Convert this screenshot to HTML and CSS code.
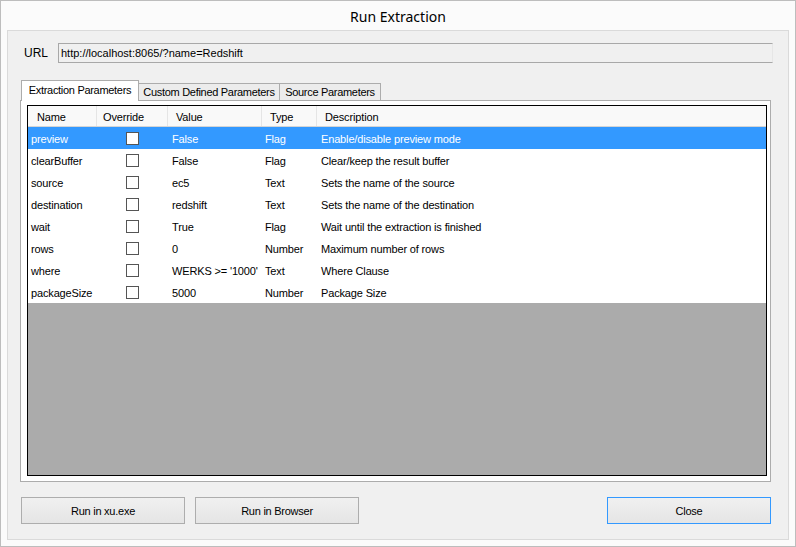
FILE: index.html
```html
<!DOCTYPE html>
<html>
<head>
<meta charset="utf-8">
<link rel="stylesheet" href="styles.css">
</head>
<body>
<div class="window">
  <div class="title">Run Extraction</div>
  <div class="client">
    <div class="url-row">
      <span class="url-label">URL</span>
      <div class="url-box">http://localhost:8065/?name=Redshift</div>
    </div>
    <div class="tabs">
      <div class="tab tab-active">Extraction Parameters</div>
      <div class="tab tab-custom">Custom Defined Parameters</div>
      <div class="tab tab-source">Source Parameters</div>
    </div>
    <div class="panel">
      <div class="grid">
        <div class="row head">
          <div class="c c-name">Name</div>
          <div class="c c-over">Override</div>
          <div class="c c-val">Value</div>
          <div class="c c-type">Type</div>
          <div class="c c-desc">Description</div>
        </div>
        <div class="row selected">
          <div class="c c-name">preview</div>
          <div class="c c-over"><span class="cb"></span></div>
          <div class="c c-val">False</div>
          <div class="c c-type">Flag</div>
          <div class="c c-desc">Enable/disable preview mode</div>
        </div>
        <div class="row">
          <div class="c c-name">clearBuffer</div>
          <div class="c c-over"><span class="cb"></span></div>
          <div class="c c-val">False</div>
          <div class="c c-type">Flag</div>
          <div class="c c-desc">Clear/keep the result buffer</div>
        </div>
        <div class="row">
          <div class="c c-name">source</div>
          <div class="c c-over"><span class="cb"></span></div>
          <div class="c c-val">ec5</div>
          <div class="c c-type">Text</div>
          <div class="c c-desc">Sets the name of the source</div>
        </div>
        <div class="row">
          <div class="c c-name">destination</div>
          <div class="c c-over"><span class="cb"></span></div>
          <div class="c c-val">redshift</div>
          <div class="c c-type">Text</div>
          <div class="c c-desc">Sets the name of the destination</div>
        </div>
        <div class="row">
          <div class="c c-name">wait</div>
          <div class="c c-over"><span class="cb"></span></div>
          <div class="c c-val">True</div>
          <div class="c c-type">Flag</div>
          <div class="c c-desc">Wait until the extraction is finished</div>
        </div>
        <div class="row">
          <div class="c c-name">rows</div>
          <div class="c c-over"><span class="cb"></span></div>
          <div class="c c-val">0</div>
          <div class="c c-type">Number</div>
          <div class="c c-desc">Maximum number of rows</div>
        </div>
        <div class="row">
          <div class="c c-name">where</div>
          <div class="c c-over"><span class="cb"></span></div>
          <div class="c c-val">WERKS &gt;= '1000'</div>
          <div class="c c-type">Text</div>
          <div class="c c-desc">Where Clause</div>
        </div>
        <div class="row">
          <div class="c c-name">packageSize</div>
          <div class="c c-over"><span class="cb"></span></div>
          <div class="c c-val">5000</div>
          <div class="c c-type">Number</div>
          <div class="c c-desc">Package Size</div>
        </div>
        <div class="empty"></div>
      </div>
    </div>
    <div class="buttons">
      <div class="btn btn-1">Run in xu.exe</div>
      <div class="btn btn-2">Run in Browser</div>
      <div class="spacer"></div>
      <div class="btn btn-focus">Close</div>
    </div>
  </div>
</div>
</body>
</html>
```

FILE: styles.css
```css
* { box-sizing: border-box; }
html, body { margin: 0; padding: 0; }
body {
  width: 796px;
  height: 547px;
  overflow: hidden;
  font-family: "Liberation Sans", Arial, sans-serif;
  font-size: 11px;
  color: #000;
  background: #fff;
}
.window {
  width: 796px;
  height: 547px;
  border: 1px solid #bdbdbd;
  background: #fbfbfb;
  display: flex;
  flex-direction: column;
  padding: 0 6px 6px 6px;
}
.title {
  height: 29px;
  flex: none;
  display: flex;
  align-items: center;
  justify-content: center;
  font-family: "Noto Sans", "Open Sans", sans-serif;
  font-size: 14px;
  padding-top: 1px;
  color: #000;
}
.client {
  flex: 1;
  border: 1px solid #dadada;
  background: #f0f0f0;
  display: flex;
  flex-direction: column;
  padding: 12px 17px 0 12px;
}
.url-row {
  display: flex;
  align-items: center;
  height: 20px;
  margin-right: -2px;
}
.url-label {
  width: 38px;
  padding-left: 4px;
  font-size: 12px;
}
.url-box {
  flex: 1;
  height: 20px;
  border: 1px solid #a8a8a8;
  border-right-color: #e6e6e6;
  background: #f0f0f0;
  padding-left: 2px;
  line-height: 18px;
}
.tabs {
  display: flex;
  align-items: flex-end;
  margin-top: 17px;
  height: 20px;
  padding-left: 1px;
  letter-spacing: -0.3px;
}
.tab {
  height: 17px;
  border: 1px solid #acacac;
  border-bottom: none;
  background: #ececec;
  line-height: 16px;
  text-align: center;
}
.tab-active {
  width: 118px;
  height: 21px;
  background: #fff;
  line-height: 19px;
  position: relative;
  z-index: 1;
  margin-bottom: -1px;
}
.tab-custom { width: 142px; margin-left: -1px; }
.tab-source { width: 102px; margin-left: -1px; }
.panel {
  height: 382px;
  border: 1px solid #acacac;
  background: #fff;
  padding: 4px 3px 5px 6px;
  display: flex;
}
.grid {
  flex: 1;
  border: 1px solid #000;
  background: #ababab;
  display: flex;
  flex-direction: column;
  letter-spacing: -0.15px;
}
.row {
  display: flex;
  height: 22px;
  background: #fff;
  align-items: center;
}
.row.head {
  height: 21px;
  background: #f9f9f9;
  border-bottom: 1px solid #d5d5d5;
}
.row.head .c {
  border-right: 1px solid #e5e5e5;
  height: 100%;
  display: flex;
  align-items: center;
  padding-left: 8px;
  padding-top: 1px;
}
.row.head .c-name { padding-left: 9px; }
.row.head .c-over { padding-left: 6px; }
.row.head .c-desc { border-right: none; }
.row.selected {
  background: #3399ff;
  color: #fff;
}
.c {
  padding-left: 3px;
  white-space: nowrap;
  overflow: hidden;
}
.row:not(.head) .c {
  padding-top: 2px;
}
.c-name { width: 69px; }
.c-over { width: 71px; }
.c-val { width: 94px; padding-left: 4px; }
.c-type { width: 55px; }
.c-desc { flex: 1; padding-left: 4px; }
.row:not(.head) .c-over {
  display: flex;
  justify-content: center;
  padding-left: 0;
  padding-right: 1px;
  padding-top: 0;
}
.cb {
  width: 13px;
  height: 13px;
  border: 1px solid #555;
  background: #fff;
  display: block;
}
.empty { flex: 1; }
.buttons {
  display: flex;
  margin-top: 15px;
  height: 27px;
  letter-spacing: -0.25px;
}
.btn {
  width: 164px;
  height: 27px;
  border: 1px solid #adadad;
  background: linear-gradient(#f0f0f0, #e5e5e5);
  display: flex;
  align-items: center;
  justify-content: center;
  font-size: 11px;
}
.btn-1 { margin-left: 1px; width: 164px; }
.btn-2 { margin-left: 10px; }
.spacer { flex: 1; }
.btn-focus { border-color: #3399ff; }
```
